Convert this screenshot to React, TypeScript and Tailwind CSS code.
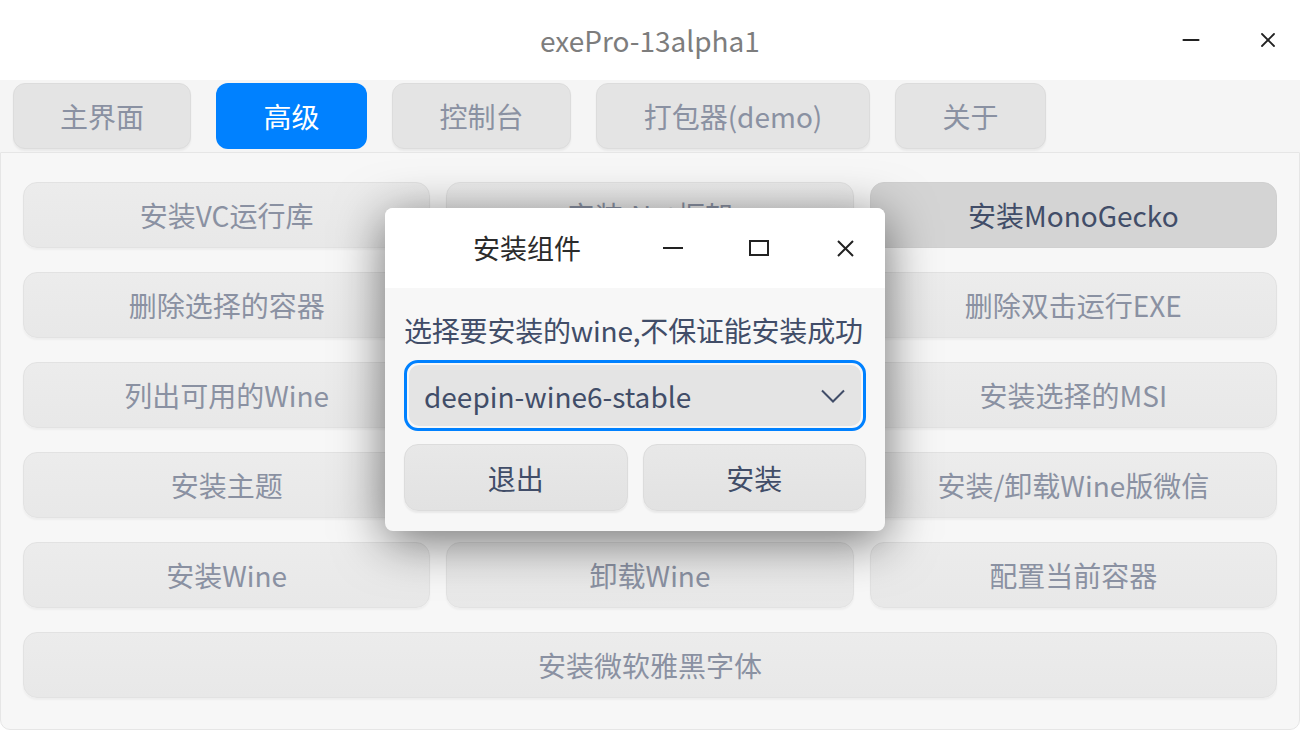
import { Minus, X } from 'lucide-react'

const tabs = [
  { label: '主界面', w: 'w-[178px]' },
  { label: '高级', w: 'w-[151px]', active: true },
  { label: '控制台', w: 'w-[179px]' },
  { label: '打包器(demo)', w: 'w-[274px]' },
  { label: '关于', w: 'w-[151px]' },
]

const grid = [
  '安装VC运行库',
  '安装.Net框架',
  '安装MonoGecko',
  '删除选择的容器',
  '删除桌面快捷方式',
  '删除双击运行EXE',
  '列出可用的Wine',
  '打开应用商店',
  '安装选择的MSI',
  '安装主题',
  '设置Wine',
  '安装/卸载Wine版微信',
  '安装Wine',
  '卸载Wine',
  '配置当前容器',
]

const font = { fontFamily: '"Noto Sans CJK SC", "Noto Sans", sans-serif' }

const App = () => {
  return (
    <div className="w-[1300px] h-[730px] bg-white relative overflow-hidden" style={font}>
      {/* Title bar */}
      <div className="h-[80px] flex items-center justify-center relative">
        <span className="text-[28px] text-[#7d7d7d]">exePro-13alpha1</span>
        <div className="absolute right-[20px] top-0 h-full flex items-center gap-[52px]">
          <Minus size={26} strokeWidth={1.8} className="text-[#222]" />
          <X size={24} strokeWidth={1.8} className="text-[#222]" />
        </div>
      </div>

      {/* Tabs */}
      <div className="h-[72px] bg-[#f5f5f5] flex items-center gap-[25px] pl-[13px]">
        {tabs.map((t) => (
          <div
            key={t.label}
            className={`${t.w} h-[66px] rounded-[12px] flex items-center justify-center text-[28px] ${
              t.active
                ? 'bg-[#0081ff] text-white'
                : 'bg-[#e4e4e4] border border-[#dcdcdc] text-[#8a91a2] shadow-[0_2px_2px_rgba(0,0,0,0.05)]'
            }`}
          >
            {t.label}
          </div>
        ))}
      </div>

      {/* Content panel */}
      <div className="h-[578px] bg-[#f7f7f7] border border-[#e6e6e6] rounded-b-[10px] pt-[29px] px-[22px]">
        <div className="grid grid-cols-3 gap-x-[16px] gap-y-[24px]">
          {grid.map((g) => (
            <div
              key={g}
              className={`h-[66px] rounded-[14px] flex items-center justify-center text-[28px] border ${
                g === '安装MonoGecko'
                  ? 'bg-[#d4d4d4] border-[#d0d0d0] text-[#414d68]'
                  : 'bg-gradient-to-b from-[#ececec] to-[#e8e8e8] border-[#e2e2e2] text-[#8a91a2] shadow-[0_2px_2px_rgba(0,0,0,0.04)]'
              }`}
            >
              {g}
            </div>
          ))}
          <div className="col-span-3 h-[66px] rounded-[14px] flex items-center justify-center text-[28px] border bg-gradient-to-b from-[#ececec] to-[#e8e8e8] border-[#e2e2e2] text-[#8a91a2] shadow-[0_2px_2px_rgba(0,0,0,0.04)]">
            安装微软雅黑字体
          </div>
        </div>
      </div>

      {/* Dialog */}
      <div className="absolute left-[385px] top-[208px] w-[500px] h-[323px] rounded-[8px] overflow-hidden bg-[#f7f7f7] shadow-[0_10px_50px_rgba(0,0,0,0.55)]">
        <div className="h-[80px] bg-white relative">
          <span className="absolute left-[88px] top-0 h-full flex items-center text-[27px] text-[#2b2b2b]">安装组件</span>
          <svg className="absolute left-[278px] top-[39px]" width="20" height="2" viewBox="0 0 20 2">
            <rect width="20" height="2" fill="#222" />
          </svg>
          <svg className="absolute left-[364px] top-[32px]" width="20" height="16" viewBox="0 0 20 16">
            <rect x="1" y="1" width="18" height="14" fill="none" stroke="#222" strokeWidth="2" />
          </svg>
          <svg className="absolute left-[452px] top-[32px]" width="17" height="17" viewBox="0 0 17 17">
            <path d="M1 1 16 16 M16 1 1 16" stroke="#222" strokeWidth="2" />
          </svg>
        </div>
        <div className="px-[19px] pt-[22px]">
          <div className="text-[28px] text-[#414d68] leading-[40px] whitespace-nowrap tracking-[-0.2px]">
            选择要安装的wine,不保证能安装成功
          </div>
          <div className="mt-[10px] h-[71px] rounded-[14px] border-[3px] border-[#0081ff] p-[2px]">
            <div className="h-full rounded-[10px] bg-[#e4e4e4] flex items-center justify-between pl-[15px] pr-[16px]">
              <span className="text-[28px] text-[#414d68]">deepin-wine6-stable</span>
              <svg width="24" height="14" viewBox="0 0 24 14">
                <path d="M1 1.5 12 12.5 23 1.5" fill="none" stroke="#414d68" strokeWidth="2" />
              </svg>
            </div>
          </div>
          <div className="mt-[13px] flex gap-[15px]">
            <div className="flex-1 h-[67px] rounded-[14px] bg-gradient-to-b from-[#e8e8e8] to-[#e2e2e2] border border-[#dcdcdc] flex items-center justify-center text-[28px] text-[#414d68] shadow-[0_2px_2px_rgba(0,0,0,0.06)]">
              退出
            </div>
            <div className="flex-1 h-[67px] rounded-[14px] bg-gradient-to-b from-[#e8e8e8] to-[#e2e2e2] border border-[#dcdcdc] flex items-center justify-center text-[28px] text-[#414d68] shadow-[0_2px_2px_rgba(0,0,0,0.06)]">
              安装
            </div>
          </div>
        </div>
      </div>
    </div>
  )
}

export default App
